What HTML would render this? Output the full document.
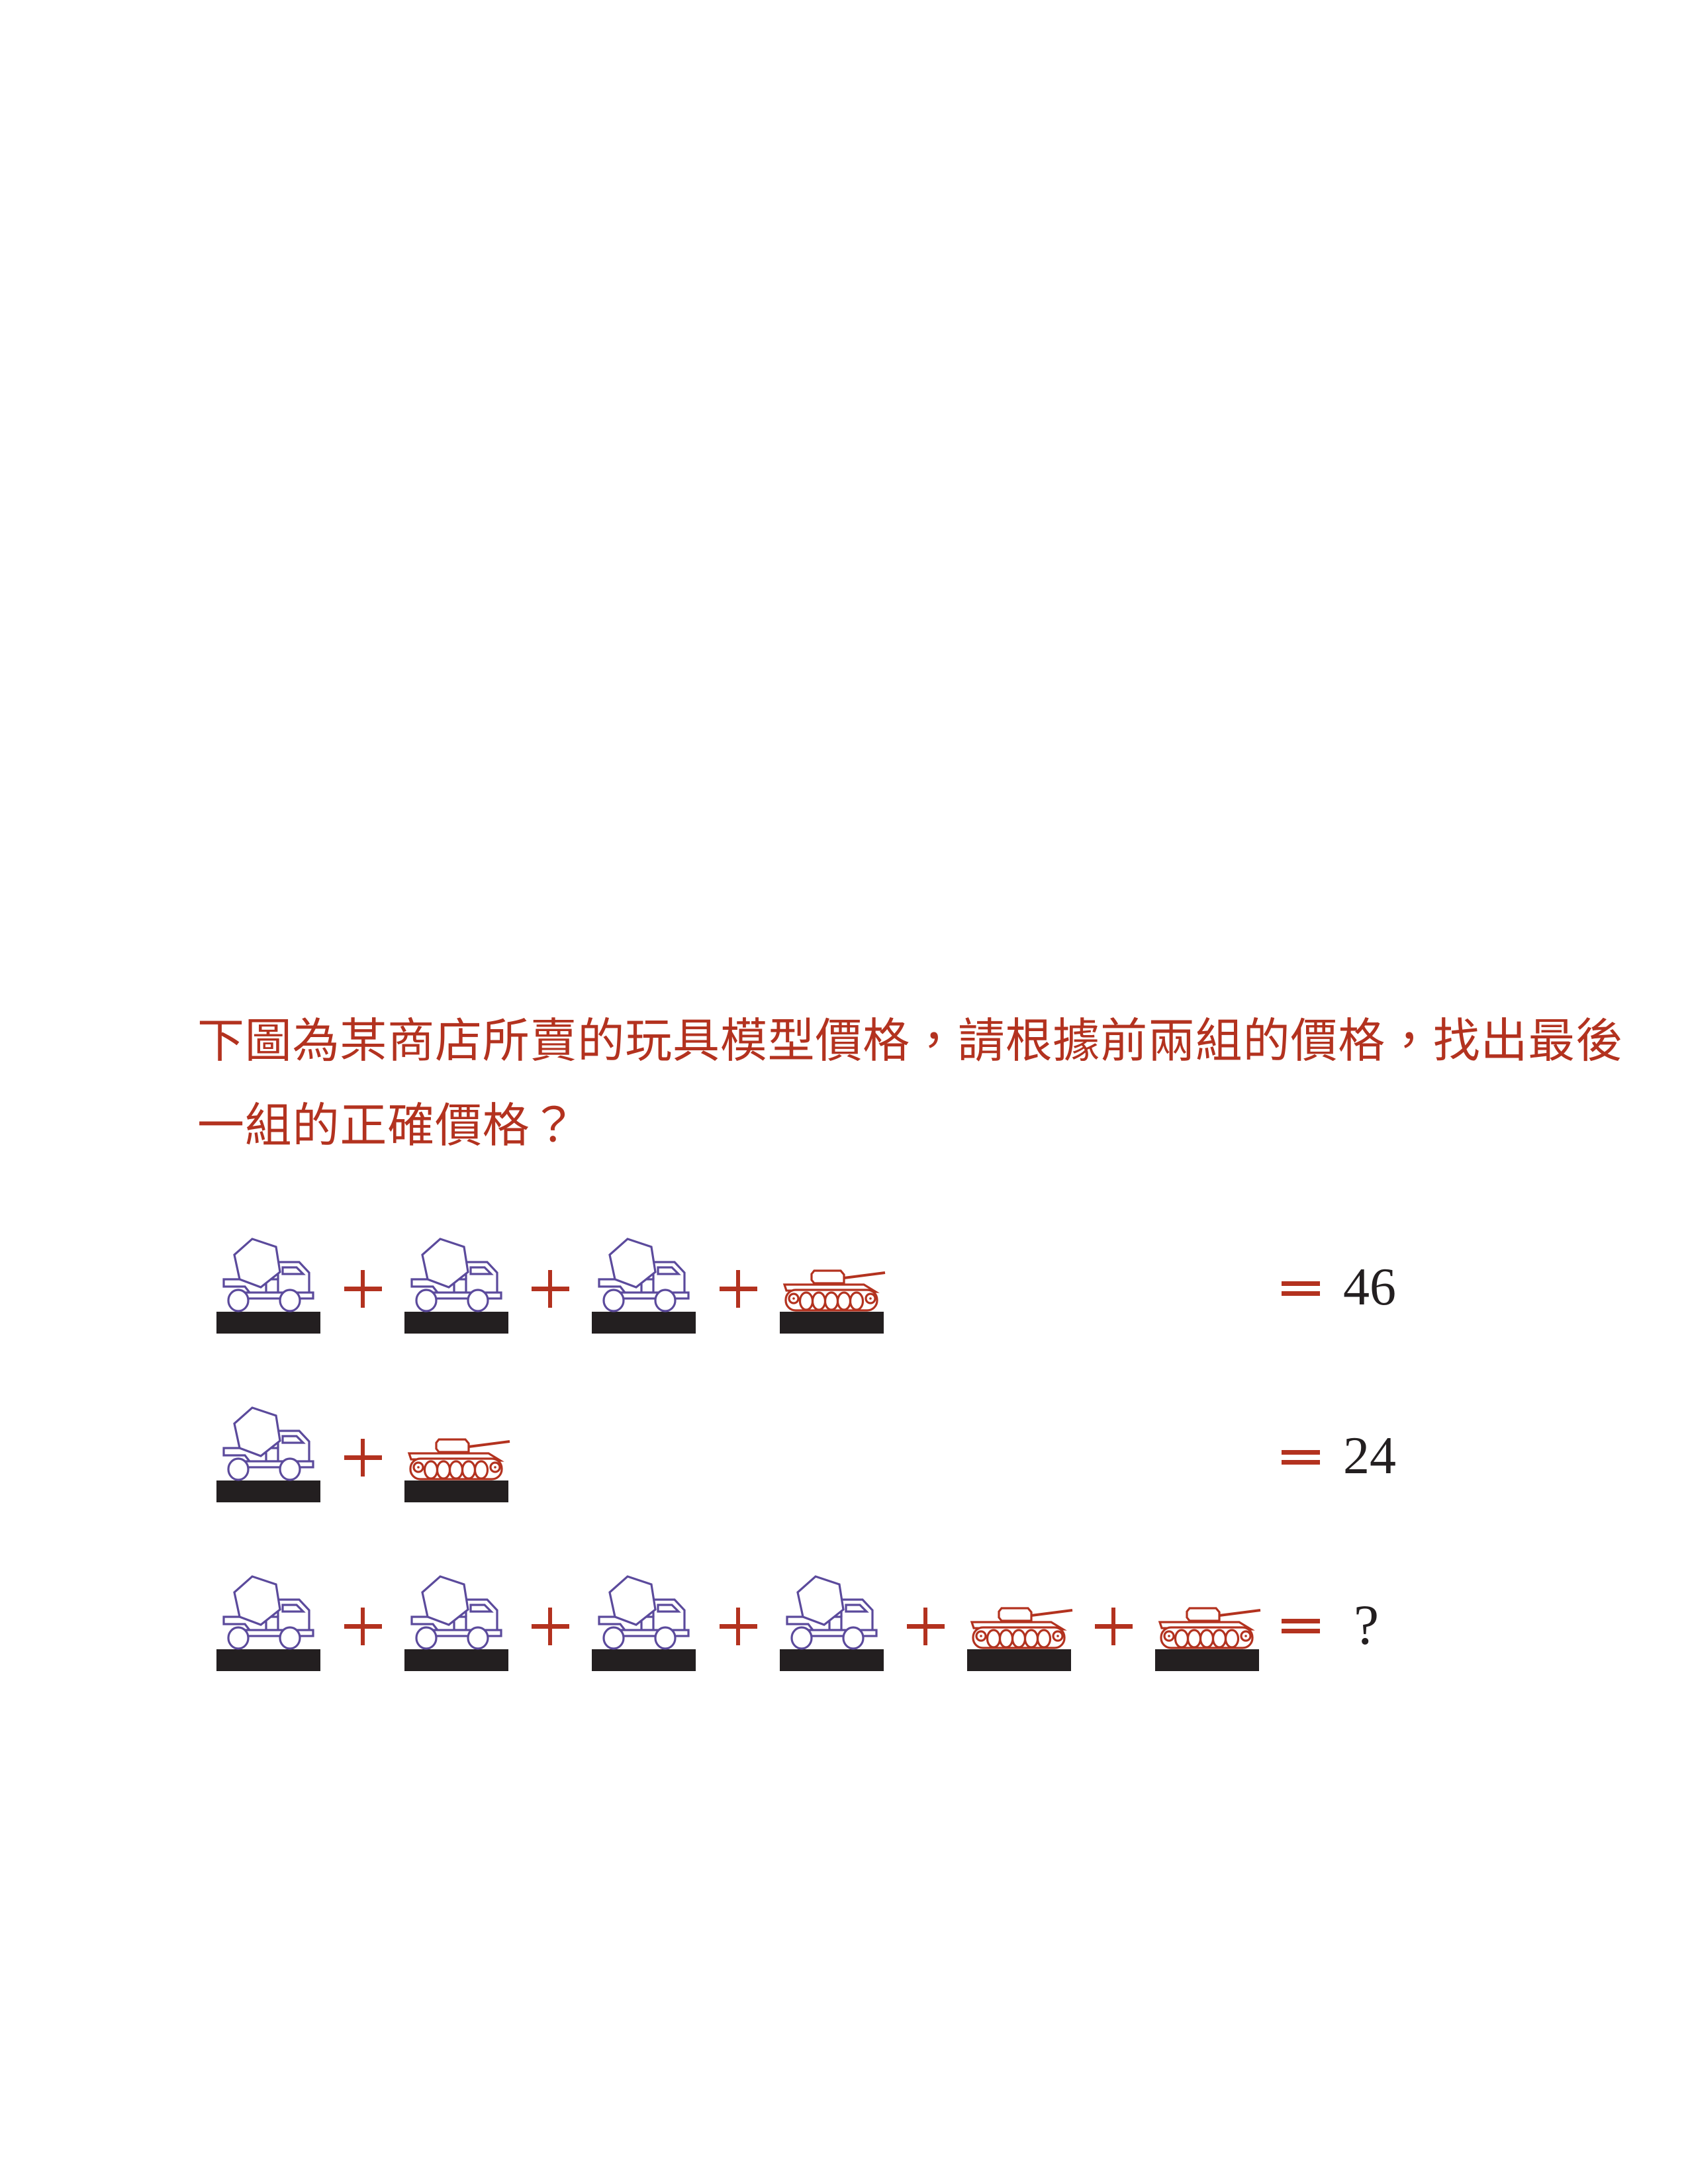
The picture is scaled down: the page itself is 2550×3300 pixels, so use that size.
<!DOCTYPE html>
<html><head><meta charset="utf-8"><style>
html,body{margin:0;padding:0;background:#fff;}
body{width:2550px;height:3300px;position:relative;overflow:hidden;}
.q{position:absolute;left:298px;top:1510px;font-family:"Liberation Sans","Noto Sans CJK TC",sans-serif;font-size:71px;letter-spacing:0.8px;line-height:128px;color:#b3321f;white-space:nowrap;}
svg{position:absolute;left:0;top:0;}
</style></head><body>
<div class="q">下圖為某商店所賣的玩具模型價格，請根據前兩組的價格，找出最後<br>一組的正確價格？</div>
<svg width="2550" height="3300" viewBox="0 0 2550 3300">
<defs>
<g id="truck">
<rect x="0" y="0" width="157" height="33" fill="#231f20"/>
<g fill="none" stroke="#5b4a9c" stroke-width="3.2" stroke-linejoin="miter">
<path d="M35,-49 L11,-49 L11,-38 L43,-38 L50,-29"/>
<rect x="75" y="-49" width="18" height="20"/>
<path d="M93,-49 L93,-75 L125,-75 L140,-59 L140,-29"/>
<polygon points="100,-67 121,-67 131,-57 100,-57"/>
<rect x="43" y="-29" width="103" height="9" fill="#fff"/>
<polygon points="54,-110 90,-98 96,-60 67,-37 35,-49 27,-86" fill="#fff"/>
<ellipse cx="33" cy="-17" rx="15" ry="16" fill="#fff"/>
<ellipse cx="111" cy="-17" rx="15" ry="16" fill="#fff"/>
</g>
</g>
<g id="tank">
<rect x="0" y="0" width="157" height="33" fill="#231f20"/>
<g fill="none" stroke="#b3321f" stroke-width="3.2">
<path d="M52,-62 L92,-62 L97,-56 L97,-43 L52,-43 L48,-48 L48,-57 Z"/>
<line x1="97" y1="-51" x2="159" y2="-59" stroke-width="4"/>
<path d="M7,-41 L127,-41 L145,-30 L10,-32 Z"/>
<rect x="9" y="-33" width="138" height="31" rx="15" fill="#fff"/>
<ellipse cx="40" cy="-16" rx="9.5" ry="13"/>
<ellipse cx="59" cy="-16" rx="9.5" ry="13"/>
<ellipse cx="78" cy="-16" rx="9.5" ry="13"/>
<ellipse cx="97" cy="-16" rx="9.5" ry="13"/>
<ellipse cx="116" cy="-16" rx="9.5" ry="13"/>
<circle cx="21" cy="-20" r="7"/>
<circle cx="137" cy="-20" r="7"/>
</g>
<circle cx="21" cy="-20" r="1.8" fill="#b3321f"/>
<circle cx="137" cy="-20" r="1.8" fill="#b3321f"/>
</g>
<g id="plus" fill="#b3321f">
<rect x="-28" y="-3" width="57" height="7"/>
<rect x="-3" y="-28" width="6" height="57"/>
</g>
<g id="eq" fill="#b3321f">
<rect x="0" y="0" width="58" height="7"/>
<rect x="0" y="15" width="58" height="7"/>
</g>
</defs>

<use href="#truck" x="327" y="1982"/>
<use href="#plus" x="548" y="1947"/>
<use href="#truck" x="611" y="1982"/>
<use href="#plus" x="831" y="1947"/>
<use href="#truck" x="894" y="1982"/>
<use href="#plus" x="1115" y="1947"/>
<use href="#tank" x="1178" y="1982"/>
<use href="#eq" x="1936" y="1936"/>
<text x="2029" y="1971" font-family="Liberation Serif, serif" font-size="80" fill="#231f20">46</text>

<use href="#truck" x="327" y="2237"/>
<use href="#plus" x="548" y="2202"/>
<use href="#tank" x="611" y="2237"/>
<use href="#eq" x="1936" y="2191"/>
<text x="2029" y="2226" font-family="Liberation Serif, serif" font-size="80" fill="#231f20">24</text>

<use href="#truck" x="327" y="2492"/>
<use href="#plus" x="548" y="2457"/>
<use href="#truck" x="611" y="2492"/>
<use href="#plus" x="831" y="2457"/>
<use href="#truck" x="894" y="2492"/>
<use href="#plus" x="1115" y="2457"/>
<use href="#truck" x="1178" y="2492"/>
<use href="#plus" x="1398" y="2457"/>
<use href="#tank" x="1461" y="2492"/>
<use href="#plus" x="1682" y="2457"/>
<use href="#tank" x="1745" y="2492"/>
<use href="#eq" x="1936" y="2446"/>
<text x="2045" y="2484" font-family="Liberation Serif, serif" font-size="86" fill="#231f20">?</text>
</svg>
</body></html>
